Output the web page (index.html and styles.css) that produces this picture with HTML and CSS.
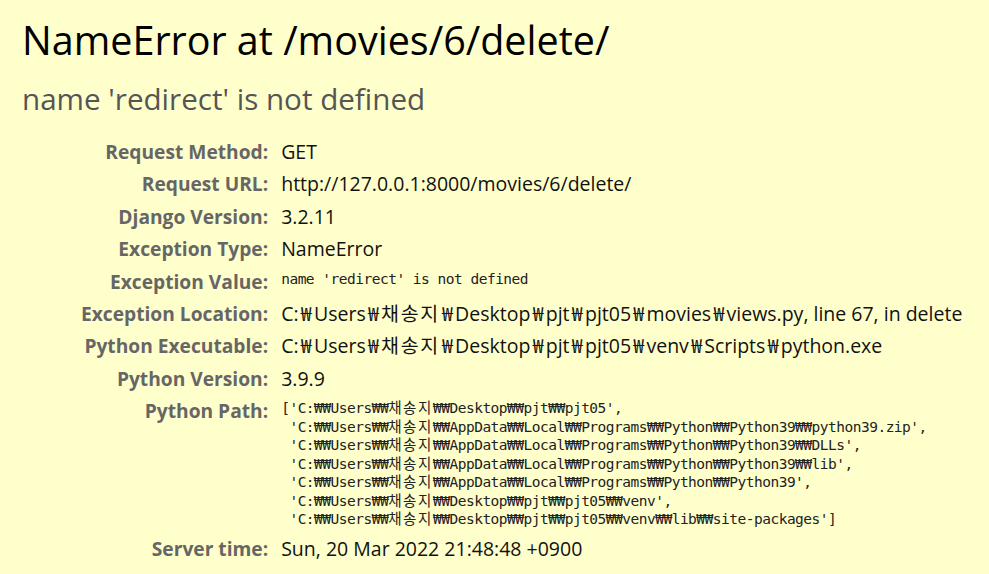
FILE: index.html
```html
<!DOCTYPE html>
<html lang="ko">
<head>
<meta charset="utf-8">
<title>NameError at /movies/6/delete/</title>
<link rel="stylesheet" href="styles.css">
</head>
<body>
<div class="summary">
  <h1 class="title">NameError at /movies/6/delete/</h1>
  <h2 class="subtitle">name 'redirect' is not defined</h2>
  <table class="meta">
    <tr><th>Request Method:</th><td>GET</td></tr>
    <tr><th>Request URL:</th><td>http://127.0.0.1:8000/movies/6/delete/</td></tr>
    <tr><th>Django Version:</th><td>3.2.11</td></tr>
    <tr><th>Exception Type:</th><td>NameError</td></tr>
    <tr><th>Exception Value:</th><td><pre class="mono">name 'redirect' is not defined</pre></td></tr>
    <tr><th>Exception Location:</th><td>C:<span class="won">₩</span>Users<span class="won">₩</span><span class="hangul">채송지</span><span class="won">₩</span>Desktop<span class="won">₩</span>pjt<span class="won">₩</span>pjt05<span class="won">₩</span>movies<span class="won">₩</span>views.py, line 67, in delete</td></tr>
    <tr><th>Python Executable:</th><td>C:<span class="won">₩</span>Users<span class="won">₩</span><span class="hangul">채송지</span><span class="won">₩</span>Desktop<span class="won">₩</span>pjt<span class="won">₩</span>pjt05<span class="won">₩</span>venv<span class="won">₩</span>Scripts<span class="won">₩</span>python.exe</td></tr>
    <tr><th>Python Version:</th><td>3.9.9</td></tr>
    <tr><th>Python Path:</th><td><pre class="mono">['C:₩₩Users₩₩<span class="ko">채송지</span>₩₩Desktop₩₩pjt₩₩pjt05',
 'C:₩₩Users₩₩<span class="ko">채송지</span>₩₩AppData₩₩Local₩₩Programs₩₩Python₩₩Python39₩₩python39.zip',
 'C:₩₩Users₩₩<span class="ko">채송지</span>₩₩AppData₩₩Local₩₩Programs₩₩Python₩₩Python39₩₩DLLs',
 'C:₩₩Users₩₩<span class="ko">채송지</span>₩₩AppData₩₩Local₩₩Programs₩₩Python₩₩Python39₩₩lib',
 'C:₩₩Users₩₩<span class="ko">채송지</span>₩₩AppData₩₩Local₩₩Programs₩₩Python₩₩Python39',
 'C:₩₩Users₩₩<span class="ko">채송지</span>₩₩Desktop₩₩pjt₩₩pjt05₩₩venv',
 'C:₩₩Users₩₩<span class="ko">채송지</span>₩₩Desktop₩₩pjt₩₩pjt05₩₩venv₩₩lib₩₩site-packages']</pre></td></tr>
    <tr><th>Server time:</th><td>Sun, 20 Mar 2022 21:48:48 +0900</td></tr>
  </table>
</div>
</body>
</html>
```
FILE: styles.css
```css
html, body {
  margin: 0;
  padding: 0;
  background: #ffffcc;
}
body {
  font-family: "Open Sans", "Noto Sans CJK KR", sans-serif;
  color: #000;
  height: 574px;
  overflow: hidden;
}
.summary {
  padding: 15.5px 22px 0 22px;
}
.title {
  margin: 0;
  font-size: 39.5px;
  font-weight: 400;
  line-height: 48px;
}
.subtitle {
  margin: 17.6px 0 18.9px 0;
  font-size: 29.6px;
  font-weight: 400;
  color: #555;
  line-height: 36px;
}
.meta {
  border-collapse: collapse;
  margin-left: 59px;
  font-size: 19.5px;
}
.meta th {
  text-align: right;
  font-weight: 700;
  font-size: 19.2px;
  color: #666;
  padding: 4px 13px 4px 0;
  line-height: 24.4px;
  vertical-align: top;
  white-space: nowrap;
}
.meta td {
  padding: 4px 0;
  line-height: 24.4px;
  vertical-align: top;
  white-space: nowrap;
  color: #111;
}
.won {
  display: inline-block;
  width: 15.4px;
  text-align: center;
  line-height: 1;
}
.hangul {
  letter-spacing: 1.6px;
  line-height: 1;
}
.mono {
  margin: 0;
  font-family: "DejaVu Sans Mono", "Noto Sans CJK KR", monospace;
  font-size: 14.5px;
  letter-spacing: -0.5px;
  line-height: 18.5px;
  color: #222;
}
.ko {
  letter-spacing: 1.6px;
  line-height: 1;
}
```
